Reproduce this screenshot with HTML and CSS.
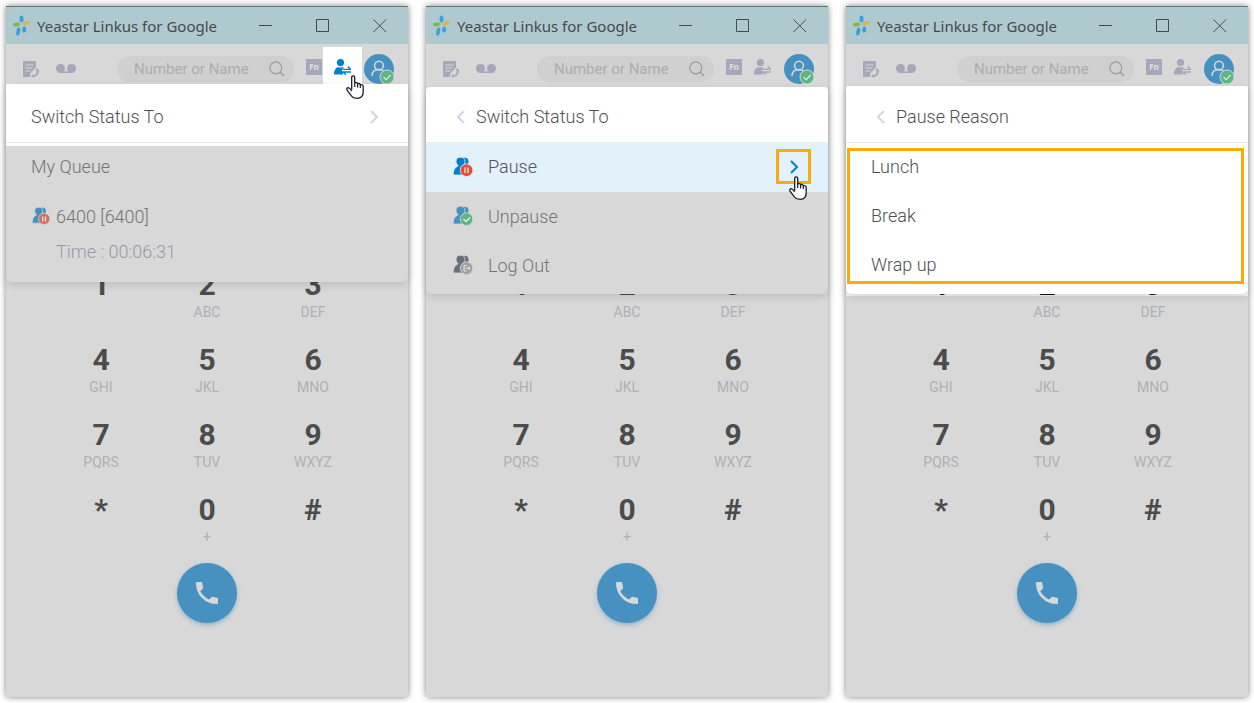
FILE: index.html
```html
<!DOCTYPE html>
<html lang="en">
<head>
    <meta charset="UTF-8">
    <meta name="viewport" content="width=device-width, initial-scale=1">
    <title>Yeastar Linkus for Google</title>
    <link rel="stylesheet" href="styles.css">
</head>
<body>
    <!-- shared icons -->
    <svg class="sprite" aria-hidden="true">
        <symbol id="logo" viewBox="0 0 18 22">
            <ellipse cx="8.5" cy="4" rx="2" ry="3.4" fill="#3f9fd8"/>
            <ellipse cx="3.6" cy="9.5" rx="3.6" ry="1.9" transform="rotate(-8 3.6 9.5)" fill="#85b840"/>
            <ellipse cx="13.4" cy="8" rx="3.9" ry="1.8" transform="rotate(-22 13.4 8)" fill="#dfb04c"/>
            <ellipse cx="5.2" cy="16.6" rx="1.9" ry="4.2" transform="rotate(12 5.2 16.6)" fill="#3f9fd8"/>
            <ellipse cx="11.2" cy="14.4" rx="2" ry="3" transform="rotate(5 11.2 14.4)" fill="#3f9fd8"/>
        </symbol>
        <symbol id="min" viewBox="0 0 14 14"><path d="M0 6.5h13" stroke="#444b4d"/></symbol>
        <symbol id="max" viewBox="0 0 14 14"><path d="M.5.5h12v12H.5z" fill="none" stroke="#444b4d"/></symbol>
        <symbol id="close" viewBox="0 0 14 14"><path d="M.5.5l12.5 12.5M13 .5L.5 13" stroke="#444b4d"/></symbol>
        <symbol id="note" viewBox="0 0 17 17">
            <path fill="currentColor" d="M1 0h11q1 0 1 1v5.5L7.5 12l-.8 4H1q-1 0-1-1V1q0-1 1-1z"/>
            <path d="M2.5 4h8M2.5 7h7M2.5 10h5" stroke="#d8d8d8" stroke-width="1.2"/>
            <path d="M13.500 7q3 .5 2.700 3.500-.7 4.500-5.200 5.800-2 .4-3.200-.8l1.600-2.300 1.700.8q2.200-1.200 2.700-3.500l-1.300-1z" fill="currentColor" stroke="#d8d8d8" stroke-width=".5"/>
        </symbol>
        <symbol id="voicemail" viewBox="0 0 20 10">
            <circle cx="4.5" cy="4.5" r="4.5" fill="currentColor"/>
            <circle cx="15.5" cy="4.5" r="4.5" fill="currentColor"/>
            <path d="M4 8.2h12" stroke="currentColor" stroke-width="1.6"/>
        </symbol>
        <symbol id="search" viewBox="0 0 16 16">
            <circle cx="6.8" cy="6.8" r="6" fill="none" stroke="#9a9a9a" stroke-width="1.2"/>
            <path d="M11.2 11.2l3.6 3.6" stroke="#9a9a9a" stroke-width="1.4"/>
        </symbol>
        <symbol id="switch" viewBox="0 0 17 16">
            <circle cx="6.5" cy="3.6" r="3.6" fill="currentColor"/>
            <path fill="currentColor" d="M4 8q2.5 1.2 5 0l.6.4L8 11.4l1.3 4.1H0Q0 9.500 4 8z"/>
            <path d="M9 10.4h8L13.800 7.6M17 13h-8l3.200 2.600" fill="none" stroke="currentColor" stroke-width="1.400"/>
        </symbol>
        <symbol id="avatar" viewBox="0 0 30 30">
            <circle cx="15" cy="15" r="15" fill="#4691c0"/>
            <circle cx="15" cy="11.600" r="4.400" fill="none" stroke="#d8d8d8" stroke-width="1.500"/>
            <path d="M8 22q0-6.500 7-6.500 3 0 4.500 1.500" fill="none" stroke="#d8d8d8" stroke-width="1.500"/>
            <circle cx="23" cy="23" r="7" fill="#5bb584" stroke="#d8d8d8"/>
            <path d="M19.500 23l2.700 2.600 4.500-4.600" fill="none" stroke="#e4e4e4" stroke-width="1.300"/>
        </symbol>
        <symbol id="right" viewBox="0 0 8 14"><path d="M1 1l6 6-6 6" fill="none" stroke="currentColor" stroke-width="2"/></symbol>
        <symbol id="left" viewBox="0 0 8 14"><path d="M7 1L1 7l6 6" fill="none" stroke="currentColor" stroke-width="2"/></symbol>
        <symbol id="agents" viewBox="0 0 20 20">
            <path fill="currentColor" d="M10.500.7q5.200-.6 5 4.100 0 2-1.500 3.700-1 .8 1 1.300 3 1 3 4H9z"/>
            <path d="M7.500.2q4.500 0 4.500 4.400 0 2.600-2 4 .2.600 1.200 1 2.800 1.400 2.800 8.400H.200Q.200 11 4.600 9.200q.6-.3.4-.7-2-1.400-2-3.900Q3 .2 7.500.2z" fill="currentColor" stroke="var(--gap)" stroke-width=".8"/>
            <circle cx="13.500" cy="13.200" r="6.300" fill="var(--badge)" stroke="var(--gap)" stroke-width=".8"/>
        </symbol>
        <symbol id="phone" viewBox="0 0 24 24">
            <path fill="#d8d8d8" d="M1 2q0-1 1-1h5l1.200 6.200-3 3Q8.500 15.800 14 18.600l3-2.800 6 1.200v5q0 1-1 1Q13 23 7 17T1 2z"/>
        </symbol>
        <symbol id="hand" viewBox="0 0 18 24">
            <path fill="#fff" stroke="#1a1a2a" stroke-width="1.300" stroke-linejoin="round" d="M5.700 14.500V2.500Q5.700.8 7.200.8t1.500 1.700v5.300q2.600-.8 2.900.9 2.300-.7 2.700 1 2.800-.4 2.900 1.800v5.300q0 6.500-6 6.500-4.500 0-6.200-3L.9 14.800q-.6-2 1.400-2.100 1.400.1 3.400 3.300"/>
            <path d="M8.700 7.500v4.500M11.600 8.700v3.800M14.300 9.700v3.300" stroke="#1a1a2a" stroke-width="1.200"/>
        </symbol>
    </svg>

    <main class="windows">
        <!-- 1. switch status button -->
        <section class="window">
            <header class="titlebar">
                <svg class="logo"><use href="#logo"/></svg>
                <h1>Yeastar Linkus for Google</h1>
                <button aria-label="Minimize"><svg><use href="#min"/></svg></button>
                <button aria-label="Maximize"><svg><use href="#max"/></svg></button>
                <button aria-label="Close"><svg><use href="#close"/></svg></button>
            </header>
            <div class="stage">
                <div class="toolbar">
                    <button class="note" aria-label="Call log"><svg><use href="#note"/></svg></button>
                    <button class="voicemail" aria-label="Voicemail"><svg><use href="#voicemail"/></svg></button>
                    <label class="search">
                        <input type="text" placeholder="Number or Name" aria-label="Number or Name">
                        <svg><use href="#search"/></svg>
                    </label>
                    <div class="tools">
                        <button class="fn">Fn</button>
                        <button class="switch active" aria-label="Switch status">
                            <svg class="icon"><use href="#switch"/></svg>
                            <svg class="hand"><use href="#hand"/></svg>
                        </button>
                    </div>
                    <button class="avatar" aria-label="Profile"><svg><use href="#avatar"/></svg></button>
                </div>
                <div class="panel panel-queue">
                    <button class="panel-head">
                        <span>Switch Status To</span>
                        <svg class="chevron"><use href="#right"/></svg>
                    </button>
                    <div class="queue">
                        <h2>My Queue</h2>
                        <p class="queue-name"><svg class="agents paused dim" viewBox="0 0 20 20"><use href="#agents"/><path d="M12 10.500v5.500M15 10.500v5.500"/></svg>6400 [6400]</p>
                        <p class="queue-time">Time : 00:06:31</p>
                    </div>
                </div>
                <div class="keypad">
                    <button><b>1</b></button>
                    <button><b>2</b><span>ABC</span></button>
                    <button><b>3</b><span>DEF</span></button>
                    <button><b>4</b><span>GHI</span></button>
                    <button><b>5</b><span>JKL</span></button>
                    <button><b>6</b><span>MNO</span></button>
                    <button><b>7</b><span>PQRS</span></button>
                    <button><b>8</b><span>TUV</span></button>
                    <button><b>9</b><span>WXYZ</span></button>
                    <button><b>*</b></button>
                    <button><b>0</b><span>+</span></button>
                    <button><b>#</b></button>
                </div>
                <button class="call" aria-label="Call"><svg><use href="#phone"/></svg></button>
            </div>
        </section>

        <!-- 2. status list -->
        <section class="window">
            <header class="titlebar">
                <svg class="logo"><use href="#logo"/></svg>
                <h1>Yeastar Linkus for Google</h1>
                <button aria-label="Minimize"><svg><use href="#min"/></svg></button>
                <button aria-label="Maximize"><svg><use href="#max"/></svg></button>
                <button aria-label="Close"><svg><use href="#close"/></svg></button>
            </header>
            <div class="stage">
                <div class="toolbar">
                    <button class="note" aria-label="Call log"><svg><use href="#note"/></svg></button>
                    <button class="voicemail" aria-label="Voicemail"><svg><use href="#voicemail"/></svg></button>
                    <label class="search">
                        <input type="text" placeholder="Number or Name" aria-label="Number or Name">
                        <svg><use href="#search"/></svg>
                    </label>
                    <div class="tools">
                        <button class="fn">Fn</button>
                        <button class="switch" aria-label="Switch status"><svg class="icon"><use href="#switch"/></svg></button>
                    </div>
                    <button class="avatar" aria-label="Profile"><svg><use href="#avatar"/></svg></button>
                </div>
                <div class="panel panel-status">
                    <button class="panel-head back">
                        <svg class="chevron"><use href="#left"/></svg>
                        <span>Switch Status To</span>
                    </button>
                    <ul class="statuses">
                        <li class="selected">
                            <svg class="agents paused"><use href="#agents"/><path d="M12 10.500v5.500M15 10.500v5.500"/></svg>
                            <span>Pause</span>
                            <button class="more" aria-label="Pause reasons">
                                <svg class="chevron"><use href="#right"/></svg>
                                <svg class="hand"><use href="#hand"/></svg>
                            </button>
                        </li>
                        <li>
                            <svg class="agents unpaused"><use href="#agents"/><path d="M10.500 13l2.500 2.500 4-4"/></svg>
                            <span>Unpause</span>
                        </li>
                        <li>
                            <svg class="agents logout"><use href="#agents"/><path d="M13.500 10.500H11v5.500h2.500M12.500 13.200H17M15.500 11.500l1.700 1.700-1.700 1.700"/></svg>
                            <span>Log Out</span>
                        </li>
                    </ul>
                </div>
                <div class="keypad">
                    <button><b>1</b></button>
                    <button><b>2</b><span>ABC</span></button>
                    <button><b>3</b><span>DEF</span></button>
                    <button><b>4</b><span>GHI</span></button>
                    <button><b>5</b><span>JKL</span></button>
                    <button><b>6</b><span>MNO</span></button>
                    <button><b>7</b><span>PQRS</span></button>
                    <button><b>8</b><span>TUV</span></button>
                    <button><b>9</b><span>WXYZ</span></button>
                    <button><b>*</b></button>
                    <button><b>0</b><span>+</span></button>
                    <button><b>#</b></button>
                </div>
                <button class="call" aria-label="Call"><svg><use href="#phone"/></svg></button>
            </div>
        </section>

        <!-- 3. pause reasons -->
        <section class="window">
            <header class="titlebar">
                <svg class="logo"><use href="#logo"/></svg>
                <h1>Yeastar Linkus for Google</h1>
                <button aria-label="Minimize"><svg><use href="#min"/></svg></button>
                <button aria-label="Maximize"><svg><use href="#max"/></svg></button>
                <button aria-label="Close"><svg><use href="#close"/></svg></button>
            </header>
            <div class="stage stage-lit">
                <div class="toolbar">
                    <button class="note" aria-label="Call log"><svg><use href="#note"/></svg></button>
                    <button class="voicemail" aria-label="Voicemail"><svg><use href="#voicemail"/></svg></button>
                    <label class="search">
                        <input type="text" placeholder="Number or Name" aria-label="Number or Name">
                        <svg><use href="#search"/></svg>
                    </label>
                    <div class="tools">
                        <button class="fn">Fn</button>
                        <button class="switch" aria-label="Switch status"><svg class="icon"><use href="#switch"/></svg></button>
                    </div>
                    <button class="avatar" aria-label="Profile"><svg><use href="#avatar"/></svg></button>
                </div>
                <div class="panel panel-reason">
                    <button class="panel-head back">
                        <svg class="chevron"><use href="#left"/></svg>
                        <span>Pause Reason</span>
                    </button>
                    <ul class="reasons">
                        <li>Lunch</li>
                        <li>Break</li>
                        <li>Wrap up</li>
                    </ul>
                </div>
                <div class="keypad">
                    <button><b>1</b></button>
                    <button><b>2</b><span>ABC</span></button>
                    <button><b>3</b><span>DEF</span></button>
                    <button><b>4</b><span>GHI</span></button>
                    <button><b>5</b><span>JKL</span></button>
                    <button><b>6</b><span>MNO</span></button>
                    <button><b>7</b><span>PQRS</span></button>
                    <button><b>8</b><span>TUV</span></button>
                    <button><b>9</b><span>WXYZ</span></button>
                    <button><b>*</b></button>
                    <button><b>0</b><span>+</span></button>
                    <button><b>#</b></button>
                </div>
                <button class="call" aria-label="Call"><svg><use href="#phone"/></svg></button>
            </div>
        </section>
    </main>
</body>
</html>
```
FILE: styles.css
```css
* { box-sizing: border-box; margin: 0; padding: 0; }

body { background-color: #fff; color: #4f4f4f; font-family: Roboto, "Liberation Sans", sans-serif; font-size: 18px; }
button { border: 0; background: none; color: inherit; font: inherit; cursor: pointer; }
svg { display: block; flex: none; }
ul { list-style: none; }
.sprite { position: absolute; width: 0; height: 0; }

.windows { display: grid; grid-template-columns: repeat(3, minmax(0, 1fr)); gap: 18px; min-height: 100vh; padding: 6px; }
.window { display: flex; flex-direction: column; background-color: #d8d8d8; border-radius: 0 0 3px 3px; box-shadow: 0 0 6px rgba(0, 0, 0, .5); }

/* title bar */
.titlebar { display: flex; align-items: center; height: 38px; padding-left: 7px; background-color: #aecacf; border-top: 1px solid #65777a; }
.titlebar h1 { flex: 1; margin-left: 6px; color: #45494b; font-family: "Noto Sans", sans-serif; font-size: 15px; font-weight: 400; white-space: nowrap; }
.titlebar button { display: flex; align-items: center; justify-content: center; width: 57px; height: 37px; }
.titlebar button svg { width: 14px; height: 14px; }
.logo { width: 18px; height: 22px; }

/* toolbar */
.stage { position: relative; flex: 1; }
.toolbar { display: flex; align-items: center; height: 50px; padding: 0 14px 0 17px; color: #a6a7b8; }
.note svg { width: 17px; height: 17px; }
.voicemail { margin: 0 41px 0 16px; }
.voicemail svg { width: 20px; height: 10px; }
.search { display: flex; flex: 1; align-items: center; min-width: 0; height: 26px; padding: 0 9px 0 17px; background-color: #d0d0d0; border-radius: 13px; }
.search input { flex: 1; min-width: 0; border: 0; outline: 0; background: none; color: #5f5f5f; font: 15px Roboto, sans-serif; }
.search input::placeholder { color: #adadad; opacity: 1; }
.search svg { width: 16px; height: 16px; }
.tools { display: flex; align-items: center; margin: 0 2px 0 12px; padding-bottom: 4px; }
.fn { width: 16px; height: 16px; background-color: #a6a7b8; color: #e0e0e0; font-family: "Open Sans", sans-serif; font-size: 8px; font-weight: 700; line-height: 16px; }
.switch { position: relative; display: flex; align-items: center; justify-content: center; width: 39px; height: 40px; margin-left: 1px; }
.switch .icon { width: 17px; height: 16px; }
.switch.active { background-color: #fff; color: #0080ce; }
.avatar svg { width: 30px; height: 30px; }
.hand { position: absolute; z-index: 3; width: 18px; height: 24px; }
.switch .hand { top: 28px; left: 23px; }

/* drop-down panels */
.panel { position: absolute; z-index: 1; top: 42px; right: 0; left: 0; border-radius: 6px; box-shadow: 0 3px 8px rgba(0, 0, 0, .12); font-weight: 300; }
.panel-queue { top: 40px; }
.panel-status { top: 43px; padding-bottom: 4px; background-color: #d8d8d8; }
.panel-reason { padding-bottom: 4px; background-color: #fff; }
.panel-head { display: flex; align-items: center; justify-content: space-between; width: 100%; height: 57px; padding: 5px 30px 0 25px; background-color: #fff; border-bottom: 1px solid #e6e6ee; }
.panel-queue .panel-head { height: 59px; padding-top: 7px; }
.panel-status .panel-head { height: 55px; padding-top: 4px; border-bottom: 0; border-radius: 4px 4px 0 0; }
.panel-reason .panel-head { border-radius: 4px 4px 0 0; }
.panel-head.back { justify-content: flex-start; gap: 11px; padding-left: 31px; }
.chevron { width: 8px; height: 14px; color: #d5d5e4; }

.queue { padding-bottom: 19px; border-top: 3px solid #fff; background-color: #d8d8d8; border-radius: 0 0 6px 6px; color: #747474; }
.queue h2 { margin-bottom: 4px; padding-left: 25px; font-size: 18px; font-weight: 300; line-height: 42px; }
.queue-name { display: flex; align-items: center; gap: 6px; height: 49px; padding: 0 0 1px 26px; }
.queue-name .agents { width: 18px; height: 18px; }
.queue-time { padding-left: 50px; color: #9798a8; line-height: 22px; }

.statuses li { display: flex; align-items: center; gap: 15px; height: 49px; padding: 0 17px 1px 27px; color: #747474; }
.statuses li.selected { height: 50px; background-color: #e3f1fa; color: #505558; }
.more { position: relative; display: flex; align-items: center; justify-content: center; width: 35px; height: 35px; margin-left: auto; border: 3px solid #faab07; }
.more .chevron { color: #0080ce; }
.more .hand { top: 24px; left: 10px; }

/* agent icon with a state badge */
.agents { --gap: #d8d8d8; width: 20px; height: 20px; color: #4691c0; fill: none; stroke: #e8e8e8; stroke-width: 1.4; }
.agents use { stroke: none; }
.paused { --badge: #e84b31; --gap: #e3f1fa; color: #0080ce; }
.paused.dim { --badge: #d5705f; --gap: #d8d8d8; color: #4691c0; }
.unpaused { --badge: #5bb584; }
.logout { --badge: #a0a0a0; color: #6b6f7b; stroke-width: 1; }

.reasons { position: relative; }
.reasons::after { content: ""; position: absolute; top: 5px; right: 4px; bottom: 6px; left: 1px; border: 3px solid #faab07; }
.reasons li { padding: 0 0 1px 25px; line-height: 48px; }

/* undimmed strip behind the pause reasons */
.stage-lit { background: linear-gradient(#f4f4f4, #f4f4f4) 0 42px / 100% 210px no-repeat; }
.stage-lit .keypad button:nth-child(-n+3) b { color: #141414; }

/* dial pad */
.keypad { display: grid; grid-template-columns: repeat(3, 106px); grid-auto-rows: 71px; justify-content: center; row-gap: 4px; margin-top: 173px; }
.keypad button { display: flex; flex-direction: column; align-items: center; }
.keypad b { color: #4c4c4c; font-size: 30px; font-weight: 700; line-height: 36px; }
.keypad span { color: #b0b0b5; font-size: 14px; line-height: 18px; }
.call { display: flex; align-items: center; justify-content: center; width: 60px; height: 60px; margin: 0 auto; border-radius: 50%; background-color: #4691c0; box-shadow: 0 2px 4px rgba(70, 145, 192, .5); }
.call svg { width: 24px; height: 24px; }
```
